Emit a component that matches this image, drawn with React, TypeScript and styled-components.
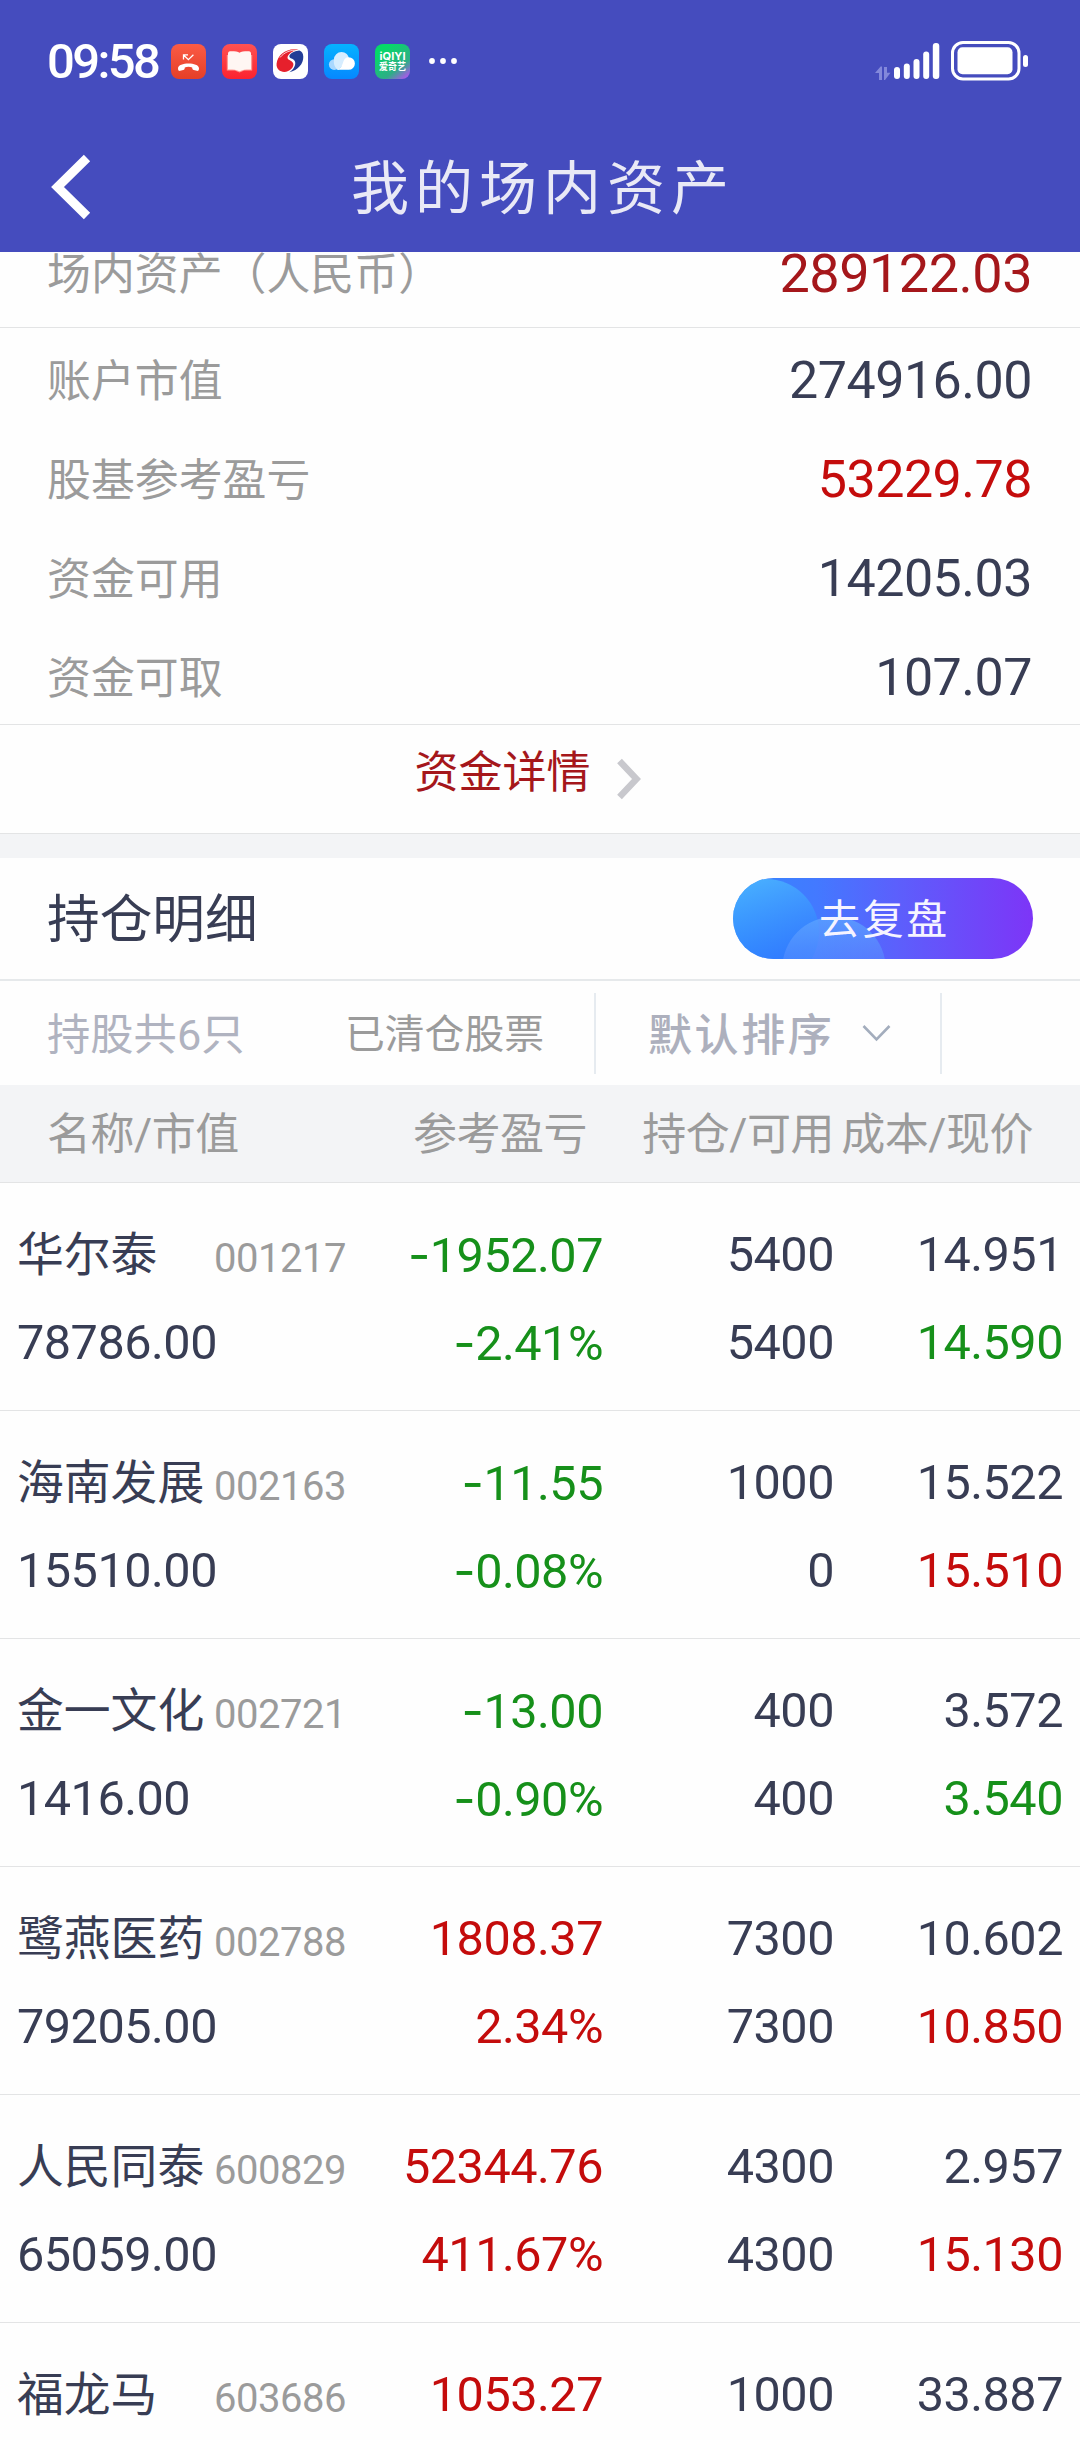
import React from "react";
import styled, { createGlobalStyle } from "styled-components";

const GlobalStyle = createGlobalStyle`
  *, *::before, *::after { box-sizing: border-box; }
  body {
    margin: 0;
    background: #fff;
    font-family: Roboto, "Noto Sans CJK SC", sans-serif;
  }
`;

const INK = "#383d54";
const GREY = "#9b9b9b";
const RED = "#c40c0c";
const DEEP_RED = "#a5171b";
const GREEN = "#16901a";
const LINE = "#e3e4e5";
const PANEL = "#f3f4f6";

const Screen = styled.div`
  width: 1080px;
  height: 2440px;
  overflow: hidden;
  background: #fefefe;
`;

const Top = styled.header`
  height: 252px;
  background: #454cbe;
`;

const StatusBar = styled.div`
  height: 122px;
  padding: 0 51px 0 47px;
  display: flex;
  align-items: center;
  justify-content: space-between;
`;

const StatusSide = styled.div`
  display: flex;
  align-items: center;
`;

const Clock = styled.span`
  width: 124px;
  padding-top: 2px;
  font-size: 49px;
  font-weight: 500;
  line-height: 56px;
  letter-spacing: -2.6px;
  color: #fff;
`;

const AppIcons = styled.div`
  display: flex;
  gap: 16px;
`;

const TitleBar = styled.div`
  height: 130px;
  padding: 0 50px;
  display: grid;
  grid-template-columns: 100px 1fr 100px;
  align-items: center;
`;

const Title = styled.h1`
  margin: 0;
  padding: 3px 0 0 6px;
  font-size: 58px;
  font-weight: 400;
  line-height: 70px;
  letter-spacing: 6px;
  text-align: center;
  color: #e9e9f6;
`;

const SummaryTotal = styled.div`
  height: 76px;
  padding: 0 48px 32px 47px;
  display: flex;
  align-items: center;
  justify-content: space-between;
  border-bottom: 1px solid ${LINE};
`;

const SummaryList = styled.div`
  height: 397px;
  padding: 3px 48px 0 47px;
  border-bottom: 1px solid ${LINE};
`;

const SummaryRow = styled.div`
  height: 99px;
  display: flex;
  align-items: center;
  justify-content: space-between;
`;

const Label = styled.span`
  padding-top: 2px;
  font-size: 43.9px;
  line-height: 60px;
  color: ${GREY};
`;

const Amount = styled.span<{ $color?: string; $size?: number }>`
  font-size: ${(p) => p.$size ?? 52}px;
  line-height: 60px;
  letter-spacing: -0.5px;
  color: ${(p) => p.$color ?? INK};
`;

const DetailLink = styled.a`
  height: 109px;
  padding: 0 24px 12px 0;
  display: flex;
  align-items: center;
  justify-content: center;
  gap: 25px;
  font-size: 44px;
  line-height: 60px;
  color: ${DEEP_RED};
  border-bottom: 1px solid ${LINE};
  svg { margin-top: 11px; }
`;

const Gap = styled.div`
  height: 24px;
  background: ${PANEL};
`;

const HoldingsHead = styled.div`
  height: 123px;
  padding: 0 47px 0 47px;
  display: flex;
  align-items: center;
  justify-content: space-between;
  border-bottom: 2px solid #e6e9eb;
`;

const HoldingsTitle = styled.h2`
  margin: 0;
  padding-top: 3px;
  font-size: 52.7px;
  font-weight: 400;
  line-height: 70px;
  color: ${INK};
`;

const ReviewButton = styled.button`
  position: relative;
  width: 300px;
  height: 81px;
  padding: 0;
  border: 0;
  border-radius: 41px;
  overflow: hidden;
  background: linear-gradient(90deg, #3489ff 0%, #4379ff 28%, #5c5ffc 55%, #7d35f7 100%);
  font: inherit;
  font-size: 41px;
  letter-spacing: 2.6px;
  color: #f6f4ff;
`;

const Bubbles = styled.svg`
  position: absolute;
  inset: 0;
`;

const ButtonText = styled.span`
  position: relative;
  display: block;
  padding: 0 0 6px 3px;
`;

const FilterBar = styled.div`
  height: 104px;
  display: grid;
  grid-template-columns: 345px 249px 348px 1fr;
  align-items: center;
`;

const HoldingCount = styled.span`
  padding: 5px 0 0 47px;
  font-size: 43.3px;
  line-height: 60px;
  color: #b0b3c0;
`;

const Cleared = styled.span`
  padding-top: 4px;
  font-size: 39.8px;
  line-height: 60px;
  color: ${GREY};
`;

const SortBox = styled.div`
  height: 81px;
  padding-left: 52px;
  display: flex;
  align-items: center;
  gap: 28px;
  border-left: 2px solid #e6ebf0;
  border-right: 2px solid #e6ebf0;
`;

const SortText = styled.span`
  padding-top: 5px;
  font-size: 44px;
  font-weight: 500;
  line-height: 60px;
  letter-spacing: 2.6px;
  color: #adb0bd;
`;

const ColumnHead = styled.div`
  height: 98px;
  padding: 3px 47px 0 47px;
  display: grid;
  grid-template-columns: 251px 289px 247px 1fr;
  align-items: center;
  background: ${PANEL};
  border-bottom: 1px solid ${LINE};
  font-size: 44px;
  line-height: 60px;
  letter-spacing: -0.5px;
  white-space: nowrap;
  color: ${GREY};
`;

const HeadCell = styled.span<{ $left?: boolean }>`
  text-align: ${(p) => (p.$left ? "left" : "right")};
`;

const HoldingRow = styled.div`
  height: 228px;
  padding: 28px 17px 0 17px;
  display: grid;
  grid-template-columns: 329px 257px 231px 1fr;
  grid-template-rows: 88px 88px;
  align-items: center;
  border-bottom: 1px solid ${LINE};
`;

const NameCell = styled.div`
  display: grid;
  grid-template-columns: 197px 1fr;
  align-items: center;
`;

const Name = styled.span`
  font-size: 46.8px;
  line-height: 60px;
  color: ${INK};
`;

const Code = styled.span`
  padding-top: 7px;
  font-size: 40px;
  line-height: 54px;
  letter-spacing: -0.5px;
  color: ${GREY};
`;

const Value = styled.span<{ $color?: string; $left?: boolean }>`
  font-size: 48.6px;
  line-height: 60px;
  letter-spacing: -0.5px;
  text-align: ${(p) => (p.$left ? "left" : "right")};
  white-space: nowrap;
  color: ${(p) => p.$color ?? INK};
`;

const Minus = styled.span`
  font-family: Inter, sans-serif;
`;

const Signed = ({ text, color }: { text: string; color: string }) => (
  <Value $color={color}>
    {text.startsWith("-") ? (
      <>
        <Minus>-</Minus>
        {text.slice(1)}
      </>
    ) : (
      text
    )}
  </Value>
);

const MissedCallIcon = () => (
  <svg width="35" height="35" viewBox="0 0 35 35">
    <defs>
      <linearGradient id="call" x1="0" y1="0" x2="0" y2="1">
        <stop offset="0" stopColor="#fb5b45" />
        <stop offset="1" stopColor="#e53f28" />
      </linearGradient>
    </defs>
    <rect width="35" height="35" rx="8" fill="url(#call)" />
    <path d="M12.500 15.500V10.800H17M12.800 11.200l4.600 4.400 5-4.800" fill="none" stroke="#fff" strokeWidth="1.300" />
    <path d="M7 24.600c0-3.600 5.400-5 10.500-5s10.500 1.400 10.500 5c0 2-.8 2.500-2.200 2.200l-3-.7c-1.200-.3-1.500-.9-1.600-2.600-1.200-.5-2.400-.7-3.700-.7s-2.500.2-3.700.7c-.1 1.700-.4 2.300-1.600 2.600l-3 .7C7.800 27.100 7 26.600 7 24.600z" fill="#fff" />
  </svg>
);

const ReaderIcon = () => (
  <svg width="35" height="35" viewBox="0 0 35 35">
    <defs>
      <linearGradient id="reader" x1="0" y1="0" x2="0" y2="1">
        <stop offset="0" stopColor="#ff5252" />
        <stop offset="1" stopColor="#fb2230" />
      </linearGradient>
    </defs>
    <rect width="35" height="35" rx="8" fill="url(#reader)" />
    <path d="M4.800 11v15.600h8l4.700 1.900 4.700-1.900h8V11z" fill="#ff9a94" />
    <path d="M6 9.600C6 7.600 7 7.200 9.400 7.200c3.600 0 6.600.2 8.100 1.600 1.500-1.400 4.500-1.600 8.100-1.600 2.400 0 3.400.4 3.400 2.400v16c-4.500-.1-8.500.2-11.500 1.700-3-1.500-7-1.800-11.500-1.700z" fill="#fff6f3" />
  </svg>
);

const BrokerIcon = () => (
  <svg width="35" height="35" viewBox="0 0 35 35">
    <rect width="35" height="35" rx="8" fill="#fff" />
    <path d="M25.500 5.600C14 3.400 4.600 10.500 3.600 19.500c-.8 7.200 6.400 10 11.600 7.500 5.400-2.600 6.600-7.600 3.600-9.600-1.900-1.200-4.300-1.600-4.300-3.600 0-3.300 5-7.200 11-8.200z" fill="#e6202c" />
    <path d="M26.500 6.500c-5.800.3-10.600 3.500-10.100 6.300.3 1.700 3.500 1.700 5 3.700 2.400 3.300-.5 9-5 11.700C25 26.600 30.600 19.500 30.300 12.800c-.1-3.300-1.300-5.300-3.800-6.300z" fill="#233c96" />
    <path d="M7 13.500C11.500 8 17.500 5.800 24.500 6.300" fill="none" stroke="#fff" strokeWidth="0.800" />
  </svg>
);

const CloudIcon = () => (
  <svg width="35" height="35" viewBox="0 0 35 35">
    <defs>
      <linearGradient id="sky" x1="0" y1="0" x2="0" y2="1">
        <stop offset="0" stopColor="#05b2ff" />
        <stop offset="1" stopColor="#0688ff" />
      </linearGradient>
    </defs>
    <rect width="35" height="35" rx="8" fill="url(#sky)" />
    <circle cx="10.200" cy="20.600" r="5.300" fill="#a9d8ff" />
    <path d="M17.500 8a7.600 7.600 0 0 1 7.600 7.200L14 25.900C9 22 9.900 17.500 9.900 15.400A7.600 7.600 0 0 1 17.500 8z" fill="#d6edff" />
    <path d="M24.600 13.200a6.200 6.200 0 0 1 0 12.600H11.500c5.500-.6 6.500-4 7.800-8 .8-2.500 2.500-4.600 5.300-4.600z" fill="#fff" />
  </svg>
);

const VideoIcon = () => (
  <svg width="35" height="35" viewBox="0 0 35 35">
    <defs>
      <linearGradient id="video" x1="0.300" y1="0.100" x2="1" y2="1">
        <stop offset="0" stopColor="#06d968" />
        <stop offset="0.600" stopColor="#2dae86" />
        <stop offset="0.880" stopColor="#9c61e0" />
        <stop offset="1" stopColor="#b25cf5" />
      </linearGradient>
    </defs>
    <rect width="35" height="35" rx="8" fill="url(#video)" />
    <text x="17.500" y="16" textAnchor="middle" textLength="26" lengthAdjust="spacingAndGlyphs" fontFamily="Inter, sans-serif" fontWeight="700" fontSize="10.500" fill="#fff">iQIYI</text>
    <text x="17.500" y="26.400" textAnchor="middle" textLength="27" lengthAdjust="spacingAndGlyphs" fontFamily="Noto Sans CJK SC, sans-serif" fontWeight="700" fontSize="9.800" fill="#fff">爱奇艺</text>
  </svg>
);

const MoreDots = styled.svg`
  margin-left: 18px;
`;

const SignalIcon = () => (
  <svg width="66" height="40" viewBox="0 0 66 40">
    <path d="M0 32l5.600-6.500H7V39H4v-7zM15.500 31.800L10 39H9V26h3v5.800z" fill="#8388db" />
    <g fill="#fff">
      <rect x="19" y="26" width="6" height="12" rx="3" />
      <rect x="28.800" y="22.500" width="6" height="15.500" rx="3" />
      <rect x="38.500" y="18" width="6" height="20" rx="3" />
      <rect x="48.200" y="10.500" width="6" height="27.500" rx="3" />
      <rect x="57.800" y="2" width="6.500" height="36" rx="3" />
    </g>
  </svg>
);

const BatteryIcon = styled.svg`
  margin-left: 10px;
`;

type Holding = {
  name: string;
  code: string;
  market: string;
  pnl: string;
  rate: string;
  color: string;
  held: string;
  usable: string;
  cost: string;
  price: string;
  priceColor: string;
};

const holdings: Holding[] = [
  { name: "华尔泰", code: "001217", market: "78786.00", pnl: "-1952.07", rate: "-2.41%", color: GREEN, held: "5400", usable: "5400", cost: "14.951", price: "14.590", priceColor: GREEN },
  { name: "海南发展", code: "002163", market: "15510.00", pnl: "-11.55", rate: "-0.08%", color: GREEN, held: "1000", usable: "0", cost: "15.522", price: "15.510", priceColor: RED },
  { name: "金一文化", code: "002721", market: "1416.00", pnl: "-13.00", rate: "-0.90%", color: GREEN, held: "400", usable: "400", cost: "3.572", price: "3.540", priceColor: GREEN },
  { name: "鹭燕医药", code: "002788", market: "79205.00", pnl: "1808.37", rate: "2.34%", color: RED, held: "7300", usable: "7300", cost: "10.602", price: "10.850", priceColor: RED },
  { name: "人民同泰", code: "600829", market: "65059.00", pnl: "52344.76", rate: "411.67%", color: RED, held: "4300", usable: "4300", cost: "2.957", price: "15.130", priceColor: RED },
  { name: "福龙马", code: "603686", market: "", pnl: "1053.27", rate: "", color: RED, held: "1000", usable: "", cost: "33.887", price: "", priceColor: RED },
];

const summary = [
  { label: "账户市值", value: "274916.00" },
  { label: "股基参考盈亏", value: "53229.78", color: RED },
  { label: "资金可用", value: "14205.03" },
  { label: "资金可取", value: "107.07" },
];

export default function App() {
  return (
    <>
      <GlobalStyle />
      <Screen>
        <Top>
          <StatusBar>
            <StatusSide>
              <Clock>09:58</Clock>
              <AppIcons>
                <MissedCallIcon />
                <ReaderIcon />
                <BrokerIcon />
                <CloudIcon />
                <VideoIcon />
              </AppIcons>
              <MoreDots width="30" height="8" viewBox="0 0 30 8" fill="#fff">
                <circle cx="4" cy="4" r="2.900" />
                <circle cx="15" cy="4" r="2.900" />
                <circle cx="26" cy="4" r="2.900" />
              </MoreDots>
            </StatusSide>
            <StatusSide>
              <SignalIcon />
              <BatteryIcon width="78" height="40" viewBox="0 0 78 40">
                <rect x="1.500" y="1.500" width="66.500" height="36.500" rx="10.500" fill="none" stroke="#fff" strokeWidth="3" />
                <rect x="6.500" y="6.300" width="55" height="27" rx="5" fill="#fff" />
                <rect x="72" y="14" width="5" height="12" rx="2.500" fill="#fff" />
              </BatteryIcon>
            </StatusSide>
          </StatusBar>
          <TitleBar>
            <svg width="42" height="66" viewBox="0 0 42 66">
              <path d="M37 4L7.500 33l29.500 29" fill="none" stroke="#fff" strokeWidth="9" />
            </svg>
            <Title>我的场内资产</Title>
          </TitleBar>
        </Top>

        <SummaryTotal>
          <Label>场内资产（人民币）</Label>
          <Amount $color={DEEP_RED} $size={54}>289122.03</Amount>
        </SummaryTotal>
        <SummaryList>
          {summary.map((s) => (
            <SummaryRow key={s.label}>
              <Label>{s.label}</Label>
              <Amount $color={s.color}>{s.value}</Amount>
            </SummaryRow>
          ))}
        </SummaryList>
        <DetailLink>
          资金详情
          <svg width="26" height="42" viewBox="0 0 26 42">
            <path d="M3.500 3L20.500 21l-17 18" fill="none" stroke="#c8c8cd" strokeWidth="6.500" />
          </svg>
        </DetailLink>
        <Gap />

        <HoldingsHead>
          <HoldingsTitle>持仓明细</HoldingsTitle>
          <ReviewButton>
            <Bubbles width="300" height="81" viewBox="0 0 300 81">
              <defs>
                <linearGradient id="bubble" x1="0" y1="0" x2="0.300" y2="1">
                  <stop offset="0" stopColor="#52c4ff" stopOpacity="0.800" />
                  <stop offset="0.850" stopColor="#2a7cff" stopOpacity="0.600" />
                </linearGradient>
                <linearGradient id="bubbleSmall" x1="0" y1="0" x2="0" y2="1">
                  <stop offset="0" stopColor="#5ea6ff" stopOpacity="0.750" />
                  <stop offset="0.500" stopColor="#5a8cff" stopOpacity="0.450" />
                </linearGradient>
              </defs>
              <circle cx="33" cy="54" r="53" fill="url(#bubble)" />
              <circle cx="101" cy="90.500" r="51.700" fill="url(#bubbleSmall)" />
            </Bubbles>
            <ButtonText>去复盘</ButtonText>
          </ReviewButton>
        </HoldingsHead>

        <FilterBar>
          <HoldingCount>持股共6只</HoldingCount>
          <Cleared>已清仓股票</Cleared>
          <SortBox>
            <SortText>默认排序</SortText>
            <svg width="29" height="18" viewBox="0 0 29 18">
              <path d="M1.500 2L14.500 15.500 27.500 2" fill="none" stroke="#a3adbd" strokeWidth="2.600" />
            </svg>
          </SortBox>
        </FilterBar>

        <ColumnHead>
          <HeadCell $left>名称/市值</HeadCell>
          <HeadCell>参考盈亏</HeadCell>
          <HeadCell>持仓/可用</HeadCell>
          <HeadCell>成本/现价</HeadCell>
        </ColumnHead>

        {holdings.map((h) => (
          <HoldingRow key={h.code}>
            <NameCell>
              <Name>{h.name}</Name>
              <Code>{h.code}</Code>
            </NameCell>
            <Signed text={h.pnl} color={h.color} />
            <Value>{h.held}</Value>
            <Value>{h.cost}</Value>
            {h.market && (
              <>
                <Value $left>{h.market}</Value>
                <Signed text={h.rate} color={h.color} />
                <Value>{h.usable}</Value>
                <Value $color={h.priceColor}>{h.price}</Value>
              </>
            )}
          </HoldingRow>
        ))}
      </Screen>
    </>
  );
}
